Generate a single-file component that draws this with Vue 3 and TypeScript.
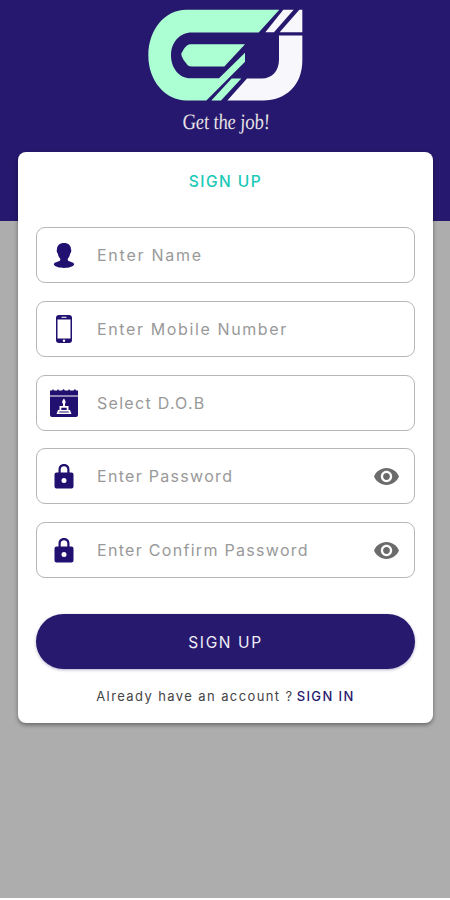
<script setup lang="ts">
import { ref } from 'vue'

type IconName = 'user' | 'phone' | 'calendar' | 'lock'
interface Field {
  id: string
  label: string
  icon: IconName
  secret: boolean
}

const fields: Field[] = [
  { id: 'name', label: 'Enter Name', icon: 'user', secret: false },
  { id: 'mobile', label: 'Enter Mobile Number', icon: 'phone', secret: false },
  { id: 'dob', label: 'Select D.O.B', icon: 'calendar', secret: false },
  { id: 'password', label: 'Enter Password', icon: 'lock', secret: true },
  { id: 'confirm', label: 'Enter Confirm Password', icon: 'lock', secret: true },
]

const values = ref<Record<string, string>>({})
const shown = ref<Record<string, boolean>>({})

function inputType(field: Field): string {
  return field.secret && !shown.value[field.id] ? 'password' : 'text'
}
</script>

<template>
  <div class="screen">
    <header class="hero">
      <svg class="logo" viewBox="24 27 465 275" aria-hidden="true">
        <g fill="#acffd3">
          <path d="M418 29H139C74 29 25 89 25 166C25 243 77 301 139 301H199L315 185V158L237 234H151C117 234 93 203 93 165C93 127 119 97 155 97H356Z" />
          <path d="M315 132H150Q139 134 132 146L124 160Q123 168 130 178L143 195Q148 199 156 199H253Z" />
          <path d="M275 235H304L243 301H214Z" />
        </g>
        <g fill="#f8f7fb">
          <path d="M430 29H461L402 96H376Z" />
          <path d="M487 29V96H419L478 29Z" />
          <path d="M417 106H487V181C487 255 438 301 369 301H262L321 235H365C397 235 417 212 417 178Z" />
        </g>
      </svg>
      <p class="tagline">Get the job!</p>
    </header>

    <main class="card">
      <h1 class="title">SIGN UP</h1>
      <form class="form" @submit.prevent>
        <label v-for="field in fields" :key="field.id" class="field">
          <span class="icon-slot">
            <svg v-if="field.icon === 'user'" class="icon" viewBox="0 0 30 30" fill="#21106f">
              <path d="M15 3C10.500 3 8 5.500 8 9.500C7.300 10 7.800 13 8.800 13.500C9.300 16 10 17.300 11.200 18.500V20.500C9 22 5 22 4.800 24.500C7 29 23 29 25.200 24.500C25 22 21 22 18.800 20.500V18.500C20 17.300 20.700 16 21.200 13.500C22.200 13 22.700 10 22 9.500C22 5.500 19.500 3 15 3Z" />
            </svg>
            <svg v-else-if="field.icon === 'phone'" class="icon" viewBox="0 0 30 30">
              <rect x="7" y="1" width="16" height="28" rx="3" fill="#21106f" />
              <path fill="#fff" d="M8.500 5.500H21.500V24.500H8.500ZM12.500 2.700H17.500V3.700H12.500Z" />
              <circle cx="15" cy="26.700" r="1.200" fill="#fff" />
            </svg>
            <svg v-else-if="field.icon === 'calendar'" class="icon" viewBox="0 0 30 30">
              <path fill="#21106f" d="M1 7.500V2.500H3L4 1L5 2.500H8L9 1L10 2.500H13L14.500 1L16 2.500H19L20 1L21 2.500H24.500L26 1L27 2.500H29V7.500ZM1 8.500H29V27Q29 29 27 29H3Q1 29 1 27Z" />
              <path fill="#fff" d="M15 10.500C12.500 13.500 13 15 14 15.600V18H10.500V22H9L7.500 26H22.500L21 22H19.500V18H16V15.600C17 15 17 13.500 15 10.500Z" />
              <path fill="#21106f" d="M12.300 19.800H17.700V22H12.300ZM10.500 23.500H19.500L20 24.500H10Z" />
            </svg>
            <svg v-else class="icon" viewBox="0 0 30 30">
              <path fill="#21106f" d="M7.500 11.500H9.500V8.500C9.500 1.300 20.500 1.300 20.500 8.500V11.500H22.500Q24.500 11.500 24.500 13.500V25.500Q24.500 27.500 22.500 27.500H7.500Q5.500 27.500 5.500 25.500V13.500Q5.500 11.500 7.500 11.500ZM11.700 11.500H18.300V8.500C18.300 4.200 11.700 4.200 11.700 8.500Z" fill-rule="evenodd" />
              <circle cx="15" cy="19.500" r="2.500" fill="#fff" />
            </svg>
          </span>
          <input
            v-model="values[field.id]"
            class="input"
            :class="field.id"
            :type="inputType(field)"
            :placeholder="field.label"
          />
          <button
            v-if="field.secret"
            class="toggle"
            type="button"
            aria-label="Toggle visibility"
            @click="shown[field.id] = !shown[field.id]"
          >
            <svg viewBox="1 4.500 22 15" width="25" height="17">
              <path fill="#6b6b6b" d="M12 4.500C7 4.500 2.730 7.610 1 12c1.730 4.390 6 7.500 11 7.500s9.270-3.110 11-7.500c-1.730-4.390-6-7.500-11-7.500zM12 17c-2.760 0-5-2.240-5-5s2.240-5 5-5 5 2.240 5 5-2.240 5-5 5zm0-8c-1.660 0-3 1.340-3 3s1.340 3 3 3 3-1.340 3-3-1.340-3-3-3z" />
            </svg>
          </button>
        </label>
        <button class="submit" type="submit">SIGN UP</button>
      </form>
      <p class="footer"><span>Already have an account ?</span><a class="link">SIGN IN</a></p>
    </main>
  </div>
</template>

<style>
body {
  margin: 0;
  background: #fff;
}
</style>

<style scoped>
.screen {
  box-sizing: border-box;
  height: 898px;
  background: linear-gradient(#26186f 0 221px, #adadad 221px);
  font-family: Inter, 'Open Sans', sans-serif;
  overflow: hidden;
}
.hero {
  display: flex;
  flex-direction: column;
  align-items: center;
  box-sizing: border-box;
  height: 152px;
  padding-top: 9px;
}
.logo {
  width: 155px;
  height: 92px;
}
.tagline {
  margin: 6px 0 0 2px;
  font: italic 22px/29px 'Liberation Serif', serif;
  color: #e5e1e2;
  white-space: nowrap;
  letter-spacing: -0.3px;
  transform: scaleX(0.86) skewX(7deg);
}
.card {
  box-sizing: border-box;
  width: 415px;
  height: 571px;
  margin-left: 18px;
  padding: 20px 18px 0;
  border-radius: 8px;
  background: #fff;
  box-shadow: 0 2px 4px rgba(0, 0, 0, 0.4);
}
.title {
  margin: 0;
  font-size: 15.500px;
  font-weight: 500;
  line-height: 20px;
  letter-spacing: 1.500px;
  text-align: center;
  color: #1cc9b7;
}
.form {
  display: grid;
  gap: 17.700px;
  margin-top: 35.400px;
}
.field {
  display: flex;
  align-items: center;
  box-sizing: border-box;
  height: 56px;
  padding: 0 15px 0 12px;
  border: 1px solid #b6b6b6;
  border-radius: 9px;
}
.icon-slot {
  display: flex;
  width: 48px;
}
.icon {
  width: 30px;
  height: 30px;
}
.input {
  flex: 1;
  min-width: 0;
  padding: 0;
  border: 0;
  outline: 0;
  background: none;
  font: 400 16px/24px Inter, 'Open Sans', sans-serif;
  letter-spacing: 1.300px;
  color: #333;
}
.input.name {
  letter-spacing: 1.750px;
}
.input.mobile {
  letter-spacing: 1.620px;
}
.input::placeholder {
  color: #999;
  opacity: 1;
}
.toggle {
  display: flex;
  padding: 0;
  border: 0;
  background: none;
}
.submit {
  height: 55px;
  margin-top: 18.500px;
  padding: 3px 0 0;
  border: 0;
  border-radius: 28px;
  background: #27196e;
  box-shadow: 0 1px 3px rgba(39, 25, 110, 0.35);
  color: #f0edf8;
  font: 400 15.500px/20px Inter, 'Open Sans', sans-serif;
  letter-spacing: 1.600px;
}
.footer {
  display: flex;
  justify-content: center;
  gap: 3px;
  margin: 18px 0 0;
  font-size: 13px;
  line-height: 18px;
  letter-spacing: 1.400px;
  color: #444;
  white-space: nowrap;
}
.link {
  font-weight: 500;
  color: #27196e;
}
</style>
